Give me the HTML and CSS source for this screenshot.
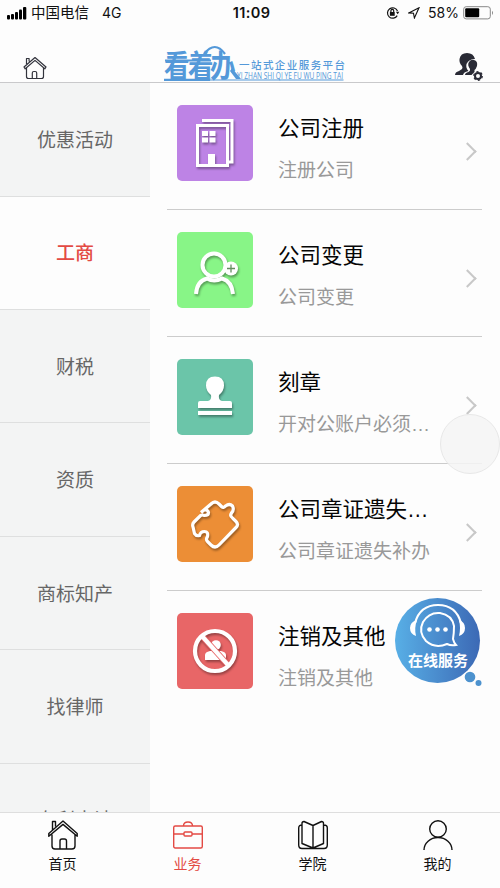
FILE: index.html
```html
<!DOCTYPE html>
<html lang="zh-CN">
<head>
<meta charset="utf-8">
<title>看着办</title>
<link rel="stylesheet" href="styles.css">
</head>
<body>
<div class="app">
  <div class="status">
    <div class="status-side">
      <svg class="signal" width="20" height="13" viewBox="0 0 20 13"><rect x="0" y="8" width="3" height="4.5" rx="1"/><rect x="4" y="7" width="3" height="5.5" rx="1"/><rect x="8" y="5" width="3" height="7.5" rx="1"/><rect x="12" y="2.5" width="3" height="10" rx="1"/><rect x="16" y="0" width="3.3" height="12.5" rx="1"/></svg>
      <span class="carrier">中国电信</span><span class="network">4G</span>
    </div>
    <div class="time">11:09</div>
    <div class="status-side right">
      <svg width="14" height="14" viewBox="0 0 14 14" fill="none" stroke="#111" stroke-width="1.2"><path d="M11.2 9.6A5.2 5.2 0 1 1 11.5 5"/><path d="M9.9 5.7h3.4l-1.6 2.6z" fill="#111" stroke="none"/><rect x="3.9" y="6" width="4.8" height="3.8" fill="#111" stroke="none"/><path d="M4.9 6V4.8a1.4 1.4 0 0 1 2.8 0V6"/></svg>
      <svg class="loc" width="12" height="12" viewBox="0 0 12 12" fill="none" stroke="#111" stroke-width="1.1"><path d="M11 .8L.8 5.9l4.700.4L6.4 11z"/></svg>
      <span class="percent">58%</span>
      <svg width="31" height="14" viewBox="0 0 31 14"><rect x=".7" y=".7" width="26.6" height="12.2" rx="2.5" fill="none" stroke="#888"/><rect x="2.2" y="2.3" width="14" height="9" rx="1" fill="#000"/><path d="M29 4.7q2 2.1 0 4.2z" fill="#888"/></svg>
    </div>
  </div>
  <header class="header">
    <svg width="24" height="24" viewBox="0 0 24 24" fill="none" stroke="#33343d" stroke-width="1.2" stroke-linejoin="round"><path d="M3.5 8V2.5h2.6v3M1 11L12 1.5 23 11l-1.2 1.8L12 4.4l-9.8 8.4zM3.5 12v8.5q0 2 2 2h13q2 0 2-2V12M9.3 22v-5q0-1.5 1.5-1.5h1.4q1.5 0 1.5 1.5v5"/></svg>
    <svg class="logo" width="184" height="38" viewBox="0 0 184 38">
      <g fill="#5499d9">
        <text class="brand" transform="translate(0 31.5) scale(1 1.2)" x="0 24 46" y="0">看着办</text>
        <path d="M0 33.800h50v2.200H0zM46 35.600h133.500v-1H46zM68 23l9 11h-5l-6-8z"/>
        <path d="M40 9Q51-5 61 9" fill="none" stroke="#5499d9" stroke-width="2.2"/>
        <path d="M1 14.500h46v2H1z"/>
        <text class="slogan" x="75" y="23.800" textLength="106">一站式企业服务平台</text>
        <text class="pinyin" x="73" y="33.700" textLength="106" lengthAdjust="spacingAndGlyphs">YI ZHAN SHI QI YE FU WU PING TAI</text>
      </g>
    </svg>
    <svg class="account" width="30" height="30" viewBox="0 0 30 30" fill="#292a35"><path d="M0 22q0-3 4-4l3-2q1-1 0-3-3-3-2.500-7Q5.500 0 12 0t8 6q-6 0-8.500 5-1 4 2 7-5 1-5.500 4z"/><path d="M10 22q0-2 3.500-3 2-1 1.500-3-3-4-1-7 2-3 5-2 4 1 3 6-1 3-2.500 4v2l-3 3z"/><circle cx="23" cy="23" r="3" fill="none" stroke="#292a35" stroke-width="2"/><circle cx="23" cy="23" r="4.3" fill="none" stroke="#292a35" stroke-width="1.2" stroke-dasharray="2.25 2.25"/></svg>
  </header>
  <div class="content">
    <nav class="sidebar">
      <div class="category">优惠活动</div>
      <div class="category active">工商</div>
      <div class="category">财税</div>
      <div class="category">资质</div>
      <div class="category">商标知产</div>
      <div class="category">找律师</div>
      <div class="category">专利申请</div>
    </nav>
    <main class="services">
      <div class="service">
        <div class="tile purple"><svg viewBox="0 0 76 76"><path d="M25 15.500h30V57h-4" stroke-width="3"/><path d="M20.500 20.500h30v40h-30z" stroke-width="3"/><path d="M25 26h6v5h-6zM32.500 26h6v5h-6zM25 32.500h6v5h-6zM32.500 32.500h6v5h-6zM31 49h7v11h-7z" fill="#fff" stroke="none"/></svg></div>
        <div class="info"><div class="name">公司注册</div><div class="desc">注册公司</div></div><i class="arrow"></i>
      </div>
      <div class="service">
        <div class="tile green"><svg viewBox="0 0 76 76"><circle cx="37" cy="33" r="11.5" stroke-width="4"/><path d="M19 62Q20 49 30 46.500q7 4 15 0 10 3 11 15.500" stroke-width="4"/><circle cx="54" cy="36.500" r="7" fill="#fff" stroke="none"/><path d="M50 36.500h8M54 32.500v8" stroke="#648d60" stroke-width="1.3"/></svg></div>
        <div class="info"><div class="name">公司变更</div><div class="desc">公司变更</div></div><i class="arrow"></i>
      </div>
      <div class="service">
        <div class="tile teal"><svg viewBox="0 0 76 76"><path d="M21 49v-5q0-2 2-2h8q4-1 3-6-5-4-5-9.500 0-9 9-9t9 9q0 5.500-5 9.500-1 5 3 6h8q2 0 2 2v5zM21 52h34v4H21z" fill="#fff" stroke="none"/></svg></div>
        <div class="info"><div class="name">刻章</div><div class="desc">开对公账户必须办理</div></div><i class="arrow"></i>
      </div>
      <div class="service">
        <div class="tile orange"><svg viewBox="0 0 76 76"><path d="M24 26.500L34 18q4-4 8 0l2.500 2.500q2 2 4-.5 4-3 7 0 2 4-1 7-2 3 1 5l3.500 3.500q3 3 0 6L42 59q-4 4-8 0l-3.500-3.500q-2-2 0-5 1-5-3-5-4 0-5 4-3 1-5-2L16 41q-1-3 1-5l6.500-6.500q2-1 4 0 4 0 4-3-1-3-4-2.500" stroke-width="3.2"/></svg></div>
        <div class="info"><div class="name">公司章证遗失补办</div><div class="desc">公司章证遗失补办</div></div><i class="arrow"></i>
      </div>
      <div class="service">
        <div class="tile red"><svg viewBox="0 0 76 76"><circle cx="39" cy="32" r="4.8" fill="#fff" stroke="none"/><path d="M28 47v-5q0-3 5-4h11q5 1 5 4v5z" fill="#fff" stroke="none"/><path d="M24 22l28 31" stroke="#e86667" stroke-width="6"/><circle cx="38" cy="38" r="20" stroke-width="4.2"/><path d="M24 22l28 31" stroke-width="4.2"/></svg></div>
        <div class="info"><div class="name">注销及其他</div><div class="desc">注销及其他</div></div>
      </div>
    </main>
  </div>
  <footer class="tabs">
    <div class="tab"><svg width="30" height="30" viewBox="0 0 30 30"><path d="M4.500 10V1.500h3v5M.8 13.500L15 1l14.200 12.500v2.700L15 4.400.8 16.200zM4 14.500V26q0 3 3 3h17q3 0 3-3V14.500M12 29v-8q0-2 2-2h2.500q2 0 2 2v8"/></svg><span>首页</span></div>
    <div class="tab current"><svg width="30" height="30" viewBox="0 0 30 30"><rect x=".7" y="6" width="28.6" height="22" rx="1.5"/><path d="M10.500 6q0-4 4.500-4t4.500 4M1 14h10M19 14h10"/><rect x="11" y="12" width="8" height="4" rx="1"/></svg><span>业务</span></div>
    <div class="tab"><svg width="30" height="30" viewBox="0 0 30 30"><path d="M4 5Q.7 5 .7 8v17q0 3.500 3.300 3.500h22q3.300 0 3.300-3.500V8q0-3-3.300-3M15 5.500L6 1.500q-2 0-2 2v20l11 4.500 10.500-4.500v-20q0-2-2-2L15 5.500V28"/></svg><span>学院</span></div>
    <div class="tab"><svg width="30" height="30" viewBox="0 0 30 30"><circle cx="15" cy="9" r="8.3"/><path d="M1 30a14 12.500 0 0 1 28 0"/></svg><span>我的</span></div>
  </footer>
  <div class="touch"></div>
  <div class="chat">
    <svg width="88" height="90" viewBox="0 0 88 90" fill="none"><defs><linearGradient id="blue"><stop stop-color="#58afe6"/><stop offset="1" stop-color="#3c69b5"/></linearGradient></defs><circle cx="42.5" cy="42.5" r="42.5" fill="url(#blue)"/><circle cx="75" cy="79" r="5.3" fill="#4d92ce"/><circle cx="83.5" cy="85" r="3" fill="#4d92ce"/><path d="M20 25q5-18 23-18t23 18" stroke="#fff" stroke-width="2.2"/><path d="M22 22q-7 2-7 8t6 8q-2-8 1-16zM64 22q6 2 6 8t-6 8q2-8 0-16z" fill="#fff"/><path d="M58 41q1 4 3 6-5 1-9-1-12 5-21-3-8-9-3-19 6-10 17-9 12 2 14 13 0 7-1 13z" stroke="#fff" stroke-width="2"/><g fill="#fff"><circle cx="34.5" cy="31.5" r="2.3"/><circle cx="42.5" cy="31.5" r="2.3"/><circle cx="50.5" cy="31.5" r="2.3"/></g></svg>
    <span class="chat-label">在线服务</span>
  </div>
</div>
</body>
</html>
```
FILE: styles.css
```css
* { box-sizing: border-box; }
body {
  margin: 0;
  background: #fdfdfd;
  color: #111;
  font-family: "Noto Sans CJK SC", sans-serif;
}
.app {
  position: relative;
  width: 500px;
  height: 888px;
  display: flex;
  flex-direction: column;
  overflow: hidden;
}
.status {
  height: 26px;
  flex: none;
  display: grid;
  grid-template-columns: 1fr auto 1fr;
  align-items: center;
  padding: 0 6px 0 7px;
  font-family: Inter, "Noto Sans CJK SC", sans-serif;
  font-size: 14px;
  line-height: 26px;
}
.status-side { display: flex; align-items: center; }
.right { justify-content: flex-end; }
.carrier { margin-left: 4px; font-size: 14.5px; }
.network { margin-left: 13px; }
.time { margin-left: 2px; font-weight: 600; font-size: 14.5px; letter-spacing: .4px; }
.loc { margin-left: 8px; }
.percent { margin: 0 4px 0 8px; }
.header {
  height: 57px;
  flex: none;
  display: grid;
  grid-template-columns: 24px 184px 30px;
  justify-content: space-between;
  align-items: end;
  padding: 0 15px 0 23px;
  border-bottom: 1px solid #c9c9cb;
}
.header > svg:first-child { margin-bottom: 2px; }
.logo { margin: 0 -5px -1px 5px; overflow: visible; }
.account { margin-bottom: -1px; }
.brand { font-size: 25.5px; font-weight: 700; }
.slogan { font-size: 10.5px; font-weight: 500; }
.pinyin { font-family: "Open Sans", sans-serif; font-size: 9px; }
.content { flex: 1; min-height: 0; display: flex; overflow: hidden; }
.sidebar { width: 150px; flex: none; background: #f3f4f4; }
.category {
  height: 113.4px;
  display: flex;
  align-items: center;
  justify-content: center;
  padding-bottom: 2px;
  border-bottom: 1px solid #dedfdf;
  color: #666;
  font-size: 19px;
}
.category:first-child { height: 113.7px; }
.active { background: #fdfdfd; color: #e34a44; font-weight: 500; }
.services { width: 315px; margin-left: 17px; }
.service {
  height: 127px;
  display: flex;
  align-items: center;
  padding: 0 5px 6px 10px;
  border-bottom: 1px solid #ccc;
}
.service:last-child { border-bottom-color: transparent; }
.tile { width: 76px; height: 76px; flex: none; border-radius: 5px; }
.tile svg {
  display: block;
  fill: none;
  stroke: #fff;
  filter: drop-shadow(1px 2px 1px rgba(0, 0, 0, .35));
}
.purple { background: #bd83e5; }
.green { background: #88f587; }
.teal { background: #6bc5a9; }
.orange { background: #ec8e36; }
.red { background: #e86667; }
.info { width: 156px; margin: 12px 0 0 25px; }
.name, .desc {
  white-space: nowrap;
  overflow: hidden;
  text-overflow: ellipsis;
  font-family: "Liberation Sans", "Noto Sans CJK SC", sans-serif;
}
.name { font-size: 21.5px; line-height: 32px; color: #050505; }
.desc { margin-top: 12px; font-size: 19px; line-height: 28px; color: #999; }
.arrow {
  width: 13px;
  height: 13px;
  margin: 6px 0 0 27px;
  border: solid #c8c8c8;
  border-width: 2px 2px 0 0;
  transform: translateY(5px) rotate(45deg);
}
.tabs {
  height: 76px;
  flex: none;
  display: flex;
  background: #fdfdfd;
  border-top: 1px solid #dedede;
}
.tab {
  flex: 1;
  display: flex;
  flex-direction: column;
  align-items: center;
  padding-top: 7px;
  font-size: 14px;
  line-height: 20px;
}
.tab svg { fill: none; stroke: #111; stroke-width: 1.4; stroke-linejoin: round; }
.tab span { margin-top: 3px; }
.tab.current { color: #e34a44; }
.tab.current svg { stroke: #e34a44; }
.touch {
  position: absolute;
  left: 440px;
  top: 414px;
  width: 60px;
  height: 60px;
  border: 1px solid #e8e8e8;
  border-radius: 50%;
  background: rgba(245, 245, 245, .86);
}
.chat { position: absolute; left: 395px; top: 598px; width: 88px; height: 90px; }
.chat-label {
  position: absolute;
  left: 0;
  top: 51px;
  width: 86px;
  text-align: center;
  color: #fff;
  font-size: 15px;
  font-weight: 700;
  line-height: 22px;
}
```
